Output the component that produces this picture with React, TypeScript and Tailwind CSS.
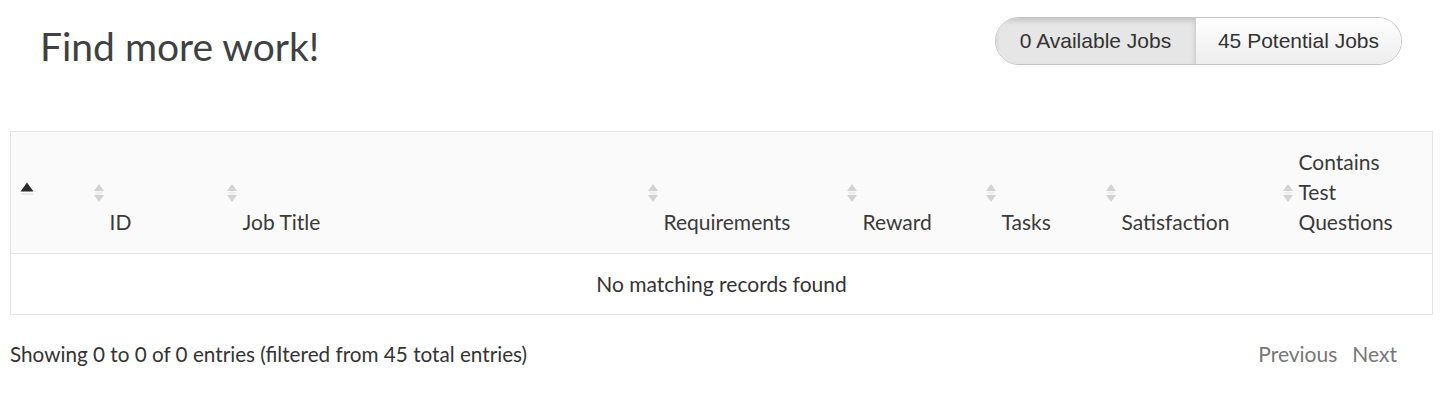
import React from "react";

const SortIcon = () => (
  <svg width="12" height="22" viewBox="0 0 12 22" className="block">
    <polygon points="1,9 6,2 11,9" fill="#d2d2d2" />
    <polygon points="1,13 6,20 11,13" fill="#d2d2d2" />
    <rect x="2.5" y="9.8" width="7" height="0.9" fill="#e6e6e6" />
    <rect x="2.5" y="11.4" width="7" height="0.9" fill="#e6e6e6" />
  </svg>
);

const AscIcon = () => (
  <svg width="14" height="22" viewBox="0 0 14 22" className="block">
    <polygon points="0.5,9.5 7,0.5 13.5,9.5" fill="#2b2b2b" />
    <rect x="1" y="11.5" width="12" height="1" fill="#dcdcdc" />
  </svg>
);

const cols: { label: string[]; width: number }[] = [
  { label: [], width: 75 },
  { label: ["ID"], width: 133 },
  { label: ["Job Title"], width: 421 },
  { label: ["Requirements"], width: 199 },
  { label: ["Reward"], width: 139 },
  { label: ["Tasks"], width: 120 },
  { label: ["Satisfaction"], width: 177 },
  { label: ["Contains", "Test", "Questions"], width: 158 },
];

export default function App() {
  return (
    <div
      className="w-[1442px] bg-white px-[10px] text-[#333]"
      style={{ fontFamily: "Lato, 'Open Sans', sans-serif" }}
    >
      <div className="mt-[17px] flex h-[48px] items-center justify-between px-[30px]">
        <h1 className="mt-[10px] text-[39px] leading-none text-[#3f4042]">Find more work!</h1>
        <div
          className="flex h-[48px] overflow-hidden rounded-full border border-[#c4c4c4] text-[21px] text-[#333]"
          style={{ fontFamily: "'Liberation Sans', Arial, sans-serif" }}
        >
          <div className="flex w-[199px] items-center justify-center bg-[#e6e6e6] shadow-[inset_0_3px_5px_rgba(0,0,0,0.14)]">
            0 Available Jobs
          </div>
          <div className="flex w-[206px] items-center justify-center border-l border-[#d0d0d0] bg-gradient-to-b from-white to-[#ededed]">
            45 Potential Jobs
          </div>
        </div>
      </div>

      <table className="mt-[66px] w-[1422px] table-fixed border-collapse border border-[#e4e4e4] text-[21px] leading-[30px]">
        <colgroup>
          {cols.map((c, i) => (
            <col key={i} style={{ width: c.width }} />
          ))}
        </colgroup>
        <thead>
          <tr className="bg-[#fafafa]">
            {cols.map((c, i) => (
              <th
                key={i}
                className="relative border-b border-[#e4e4e4] pb-[16px] pl-[24px] pr-[4px] pt-[15px] text-left align-bottom font-normal text-[#3a3a3a]"
              >
                <span className={`absolute top-1/2 -translate-y-1/2 ${i === 0 ? "left-[9px]" : "left-[7px]"}`}>
                  {i === 0 ? <AscIcon /> : <SortIcon />}
                </span>
                {c.label.map((l, j) => (
                  <div key={j}>{l}</div>
                ))}
                {i === 0 && <div className="h-[90px]" />}
              </th>
            ))}
          </tr>
        </thead>
        <tbody>
          <tr>
            <td colSpan={8} className="py-[15px] text-center text-[#333]">
              No matching records found
            </td>
          </tr>
        </tbody>
      </table>

      <div className="mt-[24px] flex items-center justify-between text-[21px] leading-[30px]">
        <div className="text-[20.7px] text-[#333]">Showing 0 to 0 of 0 entries (filtered from 45 total entries)</div>
        <div className="mr-[35px] flex gap-[15px] text-[#777]">
          <span>Previous</span>
          <span>Next</span>
        </div>
      </div>
      <div className="h-[36px]" />
    </div>
  );
}
